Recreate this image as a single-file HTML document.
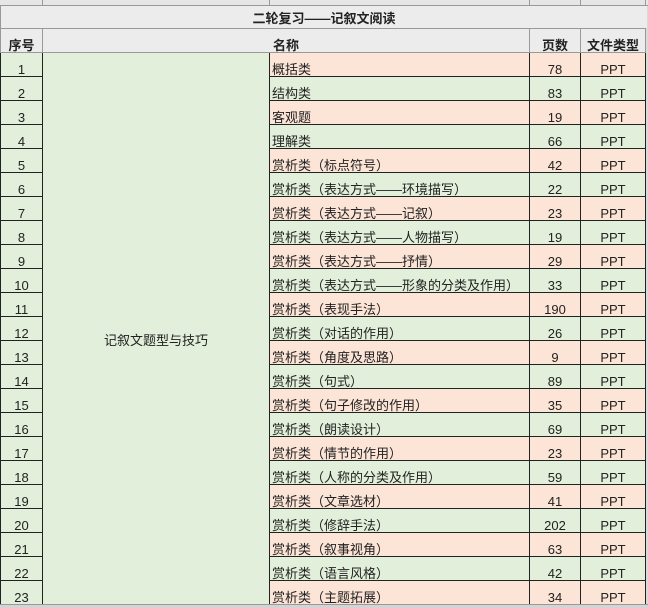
<!DOCTYPE html>
<html><head><meta charset="utf-8"><style>
body{margin:0;width:648px;height:607px;overflow:hidden;background:#d9d9d9;font-family:"Liberation Sans","Noto Sans CJK SC",sans-serif;font-size:13px;color:#222;position:relative}
.top{position:absolute;left:0;top:0;width:648px;height:5px;background:#e6e6e6;border-bottom:1px solid #999}
.top i{position:absolute;top:0;width:1px;height:5px;background:#999}
.title{position:absolute;left:0;top:6px;width:646px;height:22px;background:#ececec;border-left:1px solid #999;text-align:center;line-height:26px;font-weight:bold;font-size:13px}
table{position:absolute;left:0;top:28px;border-collapse:collapse;table-layout:fixed}
td{border:1px solid #222;height:23px;padding:0 2px 0;vertical-align:bottom;line-height:12px;white-space:nowrap;overflow:hidden}
.h td{background:#ececec;font-weight:bold;text-align:center;border-color:#999}
.c{text-align:center}
.p td.x{background:#fce4d6}
.g td.x{background:#e2efda}
td.s{background:#e2efda;text-align:center}
td.m{background:#e2efda;text-align:center;vertical-align:middle;padding-top:24px}
.bot{position:absolute;left:0;top:604px;width:648px;height:3px;background:#d4d4d4;border-top:1px solid #999}
</style></head><body>
<div class="top"><i style="left:42px"></i><i style="left:269px"></i><i style="left:529px"></i><i style="left:580px"></i><i style="left:645px"></i></div>
<div class="title">二轮复习——记叙文阅读</div>
<table>
<colgroup><col style="width:42px"><col style="width:227px"><col style="width:260px"><col style="width:51px"><col style="width:65px"></colgroup>
<tr class="h"><td>序号</td><td colspan="2">名称</td><td>页数</td><td>文件类型</td></tr>
<tr class="p"><td class="s">1</td><td class="m" rowspan="23">记叙文题型与技巧</td><td class="x">概括类</td><td class="x c">78</td><td class="x c">PPT</td></tr>
<tr class="g"><td class="s">2</td><td class="x">结构类</td><td class="x c">83</td><td class="x c">PPT</td></tr>
<tr class="p"><td class="s">3</td><td class="x">客观题</td><td class="x c">19</td><td class="x c">PPT</td></tr>
<tr class="g"><td class="s">4</td><td class="x">理解类</td><td class="x c">66</td><td class="x c">PPT</td></tr>
<tr class="p"><td class="s">5</td><td class="x">赏析类（标点符号）</td><td class="x c">42</td><td class="x c">PPT</td></tr>
<tr class="g"><td class="s">6</td><td class="x">赏析类（表达方式——环境描写）</td><td class="x c">22</td><td class="x c">PPT</td></tr>
<tr class="p"><td class="s">7</td><td class="x">赏析类（表达方式——记叙）</td><td class="x c">23</td><td class="x c">PPT</td></tr>
<tr class="g"><td class="s">8</td><td class="x">赏析类（表达方式——人物描写）</td><td class="x c">19</td><td class="x c">PPT</td></tr>
<tr class="p"><td class="s">9</td><td class="x">赏析类（表达方式——抒情）</td><td class="x c">29</td><td class="x c">PPT</td></tr>
<tr class="g"><td class="s">10</td><td class="x">赏析类（表达方式——形象的分类及作用）</td><td class="x c">33</td><td class="x c">PPT</td></tr>
<tr class="p"><td class="s">11</td><td class="x">赏析类（表现手法）</td><td class="x c">190</td><td class="x c">PPT</td></tr>
<tr class="g"><td class="s">12</td><td class="x">赏析类（对话的作用）</td><td class="x c">26</td><td class="x c">PPT</td></tr>
<tr class="p"><td class="s">13</td><td class="x">赏析类（角度及思路）</td><td class="x c">9</td><td class="x c">PPT</td></tr>
<tr class="g"><td class="s">14</td><td class="x">赏析类（句式）</td><td class="x c">89</td><td class="x c">PPT</td></tr>
<tr class="p"><td class="s">15</td><td class="x">赏析类（句子修改的作用）</td><td class="x c">35</td><td class="x c">PPT</td></tr>
<tr class="g"><td class="s">16</td><td class="x">赏析类（朗读设计）</td><td class="x c">69</td><td class="x c">PPT</td></tr>
<tr class="p"><td class="s">17</td><td class="x">赏析类（情节的作用）</td><td class="x c">23</td><td class="x c">PPT</td></tr>
<tr class="g"><td class="s">18</td><td class="x">赏析类（人称的分类及作用）</td><td class="x c">59</td><td class="x c">PPT</td></tr>
<tr class="p"><td class="s">19</td><td class="x">赏析类（文章选材）</td><td class="x c">41</td><td class="x c">PPT</td></tr>
<tr class="g"><td class="s">20</td><td class="x">赏析类（修辞手法）</td><td class="x c">202</td><td class="x c">PPT</td></tr>
<tr class="p"><td class="s">21</td><td class="x">赏析类（叙事视角）</td><td class="x c">63</td><td class="x c">PPT</td></tr>
<tr class="g"><td class="s">22</td><td class="x">赏析类（语言风格）</td><td class="x c">42</td><td class="x c">PPT</td></tr>
<tr class="p"><td class="s">23</td><td class="x">赏析类（主题拓展）</td><td class="x c">34</td><td class="x c">PPT</td></tr>
</table>
<div class="bot"></div>
</body></html>
